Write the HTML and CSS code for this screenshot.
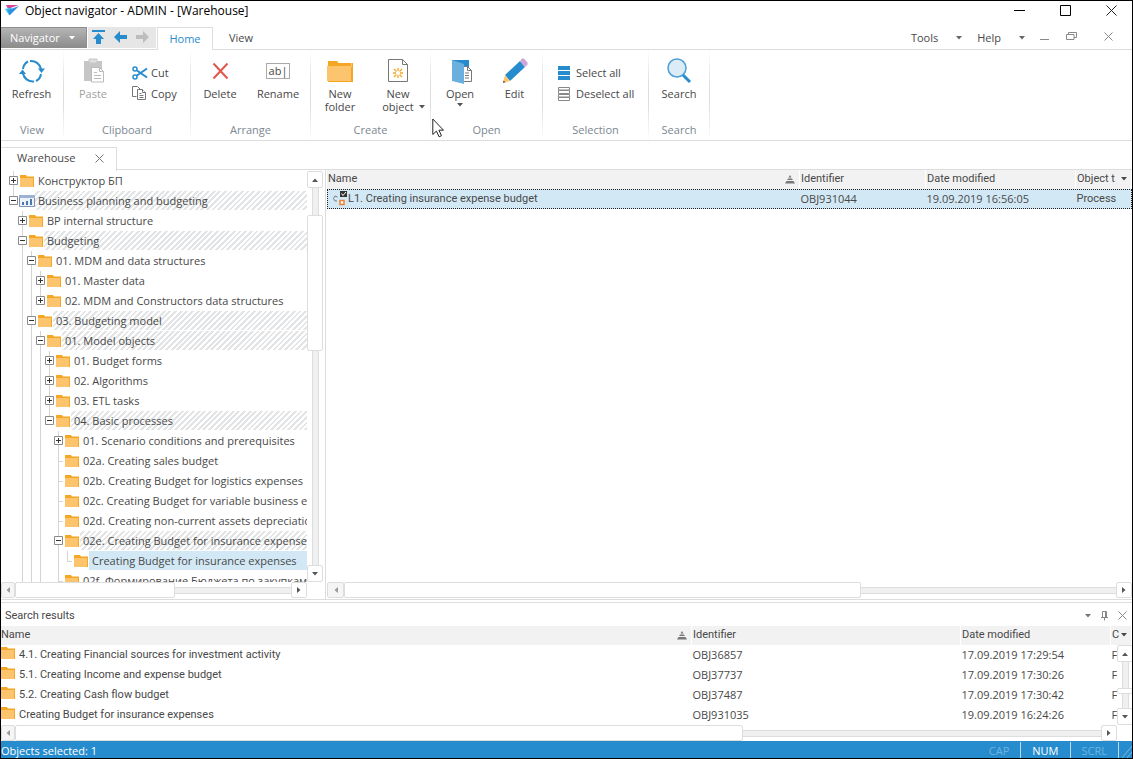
FILE: index.html
```html
<!DOCTYPE html>
<html lang="en">
<head>
<meta charset="utf-8">
<title>Object navigator - ADMIN - [Warehouse]</title>
<link rel="stylesheet" href="styles.css">
</head>
<body>
<svg class="defs" aria-hidden="true">
  <symbol id="folder" viewBox="0 0 14 14"><path d="M0 1.500q0-.5.5-.5h5.500l1 1.500h7v10.500H0z" fill="#f5a623"/><path d="M0 4h13v9H0z" fill="#fbc46d"/></symbol>
  <symbol id="plus" viewBox="0 0 9 9"><path d="M.5.5h8v8h-8z" fill="#fff" stroke="#8a8a8a"/><path d="M2 4.500h5M4.500 2v5" stroke="#333"/></symbol>
  <symbol id="minus" viewBox="0 0 9 9"><path d="M.5.5h8v8h-8z" fill="#fff" stroke="#8a8a8a"/><path d="M2 4.500h5" stroke="#333"/></symbol>
  <symbol id="down" viewBox="0 0 6 4"><path d="M0 0h6L3 3.500z" fill="currentColor"/></symbol>
  <symbol id="up" viewBox="0 0 6 4"><path d="M0 4h6L3 .5z" fill="currentColor"/></symbol>
  <symbol id="left" viewBox="0 0 4 6"><path d="M4 0v6L.5 3z" fill="currentColor"/></symbol>
  <symbol id="right" viewBox="0 0 4 6"><path d="M0 0v6l3.500-3z" fill="currentColor"/></symbol>
  <symbol id="sort" viewBox="0 0 10 9"><path d="M5 0l1.500 2.500h-3zM3 3.500h4l.8 1.500H2.200zM1.500 6h7L10 8.500H0z" fill="#777"/></symbol>
</svg>
<div class="app">
  <header class="titlebar">
    <svg class="logo" width="14" height="11" viewBox="0 0 14 11"><path d="M1 0h12.500L3 4z" fill="#d6479b"/><path d="M0 4l7-1.500L4 10z" fill="#33c5ee"/><path d="M14 1L3 5l1.500 5.500z" fill="#2f8fe0"/></svg>
    <h1>Object navigator - ADMIN - [Warehouse]</h1>
    <div class="winbtns">
      <button aria-label="Minimize"><svg width="11" height="11"><path d="M0 5.500h11" stroke="#000"/></svg></button>
      <button aria-label="Maximize"><svg width="11" height="11"><path d="M.5.5h10v10H.5z" fill="none" stroke="#000"/></svg></button>
      <button aria-label="Close"><svg width="11" height="11"><path d="M.5.5l10 10m0-10l-10 10" stroke="#222"/></svg></button>
    </div>
  </header>

  <nav class="tabbar">
    <button class="navigator">Navigator <svg width="6" height="4"><use href="#down"/></svg></button>
    <div class="quick">
      <button aria-label="Up"><svg width="13" height="14"><path d="M0 0h13v2H0zM6.500 3l5.500 6H9v5H4V9H1z" fill="#268ccd"/></svg></button>
      <button aria-label="Back"><svg width="13" height="12"><path d="M0 6l6-6v4h7v4H6v4z" fill="#268ccd"/></svg></button>
      <button aria-label="Forward" disabled><svg width="13" height="12"><path d="M13 6L7 0v4H0v4h7v4z" fill="#bdbdbd"/></svg></button>
    </div>
    <button class="tab active">Home</button>
    <button class="tab">View</button>
    <div class="menus">
      <button class="menu">Tools <svg width="6" height="4"><use href="#down"/></svg></button>
      <button class="menu help">Help <svg width="6" height="4"><use href="#down"/></svg></button>
      <button aria-label="Minimize document"><svg width="9" height="10"><path d="M0 6.500h9" stroke="#888"/></svg></button>
      <button class="rest" aria-label="Restore document"><svg width="11" height="9"><path d="M.5 2.500h7.500v5H.5zM2.500 2.500v-2h8v5H8" fill="none" stroke="#888"/></svg></button>
      <button class="docx" aria-label="Close document"><svg width="9" height="9"><path d="M.5.5l8 8m0-8l-8 8" stroke="#888"/></svg></button>
    </div>
  </nav>

  <section class="ribbon" aria-label="Ribbon">
    <div class="group g-view">
      <div class="tools">
        <button class="big"><svg width="26" height="26" fill="none" stroke="#268ccd" stroke-width="2"><path d="M4 11a9.500 9.500 0 0 1 5-7.500M11 3a10 10 0 0 1 11 8M22 16a9.500 9.500 0 0 1-5 7M15 23.500a10 10 0 0 1-11-8"/><path d="M19 10.500h7l-3.500 4.500zM0 16h7l-3.500-4.500z" fill="#268ccd" stroke="none"/></svg><span>Refresh</span></button>
      </div>
      <div class="caption">View</div>
    </div>
    <div class="group g-clip">
      <div class="tools">
        <button class="big" disabled><svg width="26" height="26"><path d="M4 3h18v20H4z" fill="#c6c6c6"/><path d="M9 1h8v4H9z" fill="#dedede" stroke="#c6c6c6"/><path d="M11.500 9.500h8l4 4v10.500h-12z" fill="#fff" stroke="#bbb"/><path d="M19.500 9.500v4h4M14 14.500h3M14 17.500h7M14 20.500h7" fill="none" stroke="#bbb"/></svg><span>Paste</span></button>
        <div class="stack">
          <button class="small"><svg width="16" height="14" fill="none" stroke="#268ccd" stroke-width="1.500"><circle cx="3" cy="3" r="2"/><circle cx="3" cy="11" r="2"/><path d="M5 4.500l10 7M5 9.500l10-7" stroke-width="2"/></svg>Cut</button>
          <button class="small"><svg width="16" height="15" fill="#fff" stroke="#777"><path d="M4.500 10.500h-4V.5h5l3 3"/><path d="M5.500 3.500h5l3 3v7h-8z"/><path d="M10.500 3.500v3h3M7.500 7.500h2M7.500 9.500h4M7.500 11.500h4"/></svg>Copy</button>
        </div>
      </div>
      <div class="caption">Clipboard</div>
    </div>
    <div class="group g-pair">
      <div class="tools">
        <button class="big"><svg width="26" height="26"><path d="M6.500 5.500l14 15m0-15l-14 15" stroke="#e2574c" stroke-width="2"/></svg><span>Delete</span></button>
        <button class="big"><span class="abl">ab|</span><span>Rename</span></button>
      </div>
      <div class="caption">Arrange</div>
    </div>
    <div class="group g-pair">
      <div class="tools">
        <button class="big"><svg width="26" height="26"><path d="M1 3h9l1.500 2H26v19H1z" fill="#f5a623"/><path d="M24.500 5v3.500H0" fill="none" stroke="#fbc46d"/><path d="M1 8h23v15H0V8z" fill="#fbc46d"/></svg><span>New<br>folder</span></button>
        <button class="big"><svg width="26" height="26"><path d="M3.500 1.500h14l5 5v17h-19z" fill="#fff" stroke="#777"/><path d="M17.500 1.500v5h5" fill="none" stroke="#777"/><path d="M13 10v3M13 17v3M8 15h3M15 15h3M9 11l2.500 2.500M17 11l-2.500 2.500M9 19l2.500-2.500M17 19l-2.500-2.500" stroke="#f5a623" stroke-width="1.300"/></svg><span class="drop">New<br>object <svg width="6" height="4"><use href="#down"/></svg></span></button>
      </div>
      <div class="caption">Create</div>
    </div>
    <div class="group g-open">
      <div class="tools">
        <button class="big"><svg width="26" height="26"><path d="M5 2h17v20H5z" fill="#268ccd"/><path d="M13.500 8.500h7l4 4V23.500h-11z" fill="#fff" stroke="#777"/><path d="M20.500 8.500v4h4M18 15h4M18 17.500h4M18 20h4" fill="none" stroke="#777"/><path d="M5 2l12 4v20L5 23z" fill="#69b0df"/></svg><span>Open</span><svg class="below" width="6" height="4"><use href="#down"/></svg></button>
        <button class="big narrow"><svg width="26" height="26"><path d="M18 3l5 6L8 23l-5-6z" fill="#268ccd"/><path d="M18 3l2-2.500h2l3.500 4v2L23 9z" fill="#cfa4d8"/><path d="M3 17l5 6-7 2z" fill="#fbc46d"/><path d="M1.500 22.500L1 25l2.500-.7z" fill="#555"/></svg><span>Edit</span></button>
      </div>
      <div class="caption">Open</div>
    </div>
    <div class="group g-sel">
      <div class="tools">
        <div class="stack">
          <button class="small"><svg width="13" height="14" fill="#268ccd"><path d="M1 0h12v4H1zM1 5h12v4H1zM1 10h12v4H1z"/></svg>Select all</button>
          <button class="small"><svg width="13" height="14" fill="#fff" stroke="#888"><path d="M1.500.5h11v2.500h-11zM1.500 3.500h11v3h-11zM1.500 7.500h11v2.500h-11zM1.500 10.500h11v3h-11z"/></svg>Deselect all</button>
        </div>
      </div>
      <div class="caption">Selection</div>
    </div>
    <div class="group g-search">
      <div class="tools">
        <button class="big"><svg width="26" height="26"><path d="M17 17l7 7" stroke="#268ccd" stroke-width="3"/><circle cx="11" cy="10" r="9" fill="#dcecf6" stroke="#4a9fd6" stroke-width="1.500"/></svg><span>Search</span></button>
      </div>
      <div class="caption">Search</div>
    </div>
  </section>

  <div class="doctabs">
    <div class="doctab">Warehouse <button aria-label="Close Warehouse"><svg width="9" height="9"><path d="M.5.5l8 8m0-8l-8 8" stroke="#777"/></svg></button></div>
  </div>

  <main class="work">
    <section class="treepane" aria-label="Warehouse tree">
      <div class="treebody">
        <ul class="tree">
          <li><button class="exp first"><svg><use href="#plus"/></svg></button><svg class="fi"><use href="#folder"/></svg><span>Конструктор БП</span></li>
          <li class="hatch"><button class="exp last"><svg><use href="#minus"/></svg></button><svg class="root" width="16" height="12"><path d="M.5.5h15v11H.5z" fill="#eef2f8" stroke="#7d93b5"/><path d="M0 0h16v3H0z" fill="#9db2d0"/><path d="M3 7h2v3H3zM7 6h2v4H7zM11 4h2v6h-2z" fill="#4a78b5"/></svg><span>Business planning and budgeting</span></li>
          <li><i></i><button class="exp"><svg><use href="#plus"/></svg></button><svg class="fi"><use href="#folder"/></svg><span>BP internal structure</span></li>
          <li class="hatch"><i></i><button class="exp"><svg><use href="#minus"/></svg></button><svg class="fi"><use href="#folder"/></svg><span>Budgeting</span></li>
          <li><i></i><i class="on"></i><button class="exp"><svg><use href="#minus"/></svg></button><svg class="fi"><use href="#folder"/></svg><span>01. MDM and data structures</span></li>
          <li><i></i><i class="on"></i><i class="on"></i><button class="exp"><svg><use href="#plus"/></svg></button><svg class="fi"><use href="#folder"/></svg><span>01. Master data</span></li>
          <li><i></i><i class="on"></i><i class="on"></i><button class="exp last"><svg><use href="#plus"/></svg></button><svg class="fi"><use href="#folder"/></svg><span>02. MDM and Constructors data structures</span></li>
          <li class="hatch"><i></i><i class="on"></i><button class="exp"><svg><use href="#minus"/></svg></button><svg class="fi"><use href="#folder"/></svg><span>03. Budgeting model</span></li>
          <li class="hatch"><i></i><i class="on"></i><i class="on"></i><button class="exp"><svg><use href="#minus"/></svg></button><svg class="fi"><use href="#folder"/></svg><span>01. Model objects</span></li>
          <li><i></i><i class="on"></i><i class="on"></i><i class="on"></i><button class="exp"><svg><use href="#plus"/></svg></button><svg class="fi"><use href="#folder"/></svg><span>01. Budget forms</span></li>
          <li><i></i><i class="on"></i><i class="on"></i><i class="on"></i><button class="exp"><svg><use href="#plus"/></svg></button><svg class="fi"><use href="#folder"/></svg><span>02. Algorithms</span></li>
          <li><i></i><i class="on"></i><i class="on"></i><i class="on"></i><button class="exp"><svg><use href="#plus"/></svg></button><svg class="fi"><use href="#folder"/></svg><span>03. ETL tasks</span></li>
          <li class="hatch"><i></i><i class="on"></i><i class="on"></i><i class="on"></i><button class="exp last"><svg><use href="#minus"/></svg></button><svg class="fi"><use href="#folder"/></svg><span>04. Basic processes</span></li>
          <li><i></i><i class="on"></i><i class="on"></i><i class="on"></i><i></i><button class="exp"><svg><use href="#plus"/></svg></button><svg class="fi"><use href="#folder"/></svg><span>01. Scenario conditions and prerequisites</span></li>
          <li><i></i><i class="on"></i><i class="on"></i><i class="on"></i><i></i><i class="on tee"></i><svg class="fi"><use href="#folder"/></svg><span>02a. Creating sales budget</span></li>
          <li><i></i><i class="on"></i><i class="on"></i><i class="on"></i><i></i><i class="on tee"></i><svg class="fi"><use href="#folder"/></svg><span>02b. Creating Budget for logistics expenses</span></li>
          <li><i></i><i class="on"></i><i class="on"></i><i class="on"></i><i></i><i class="on tee"></i><svg class="fi"><use href="#folder"/></svg><span>02c. Creating Budget for variable business e</span></li>
          <li><i></i><i class="on"></i><i class="on"></i><i class="on"></i><i></i><i class="on tee"></i><svg class="fi"><use href="#folder"/></svg><span>02d. Creating non-current assets depreciatio</span></li>
          <li class="hatch"><i></i><i class="on"></i><i class="on"></i><i class="on"></i><i></i><button class="exp"><svg><use href="#minus"/></svg></button><svg class="fi"><use href="#folder"/></svg><span>02e. Creating Budget for insurance expense</span></li>
          <li class="selected"><i></i><i class="on"></i><i class="on"></i><i class="on"></i><i></i><i class="on"></i><i class="end"></i><svg class="fi"><use href="#folder"/></svg><span>Creating Budget for insurance expenses</span></li>
          <li><i></i><i class="on"></i><i class="on"></i><i class="on"></i><i></i><i class="on tee"></i><svg class="fi"><use href="#folder"/></svg><span>02f. Формирование Бюджета по закупкам</span></li>
        </ul>
        <div class="vscroll">
          <button class="sb" aria-label="Scroll up"><svg width="6" height="4"><use href="#up"/></svg></button>
          <div class="track"><div class="thumb tree-v"></div></div>
          <button class="sb" aria-label="Scroll down"><svg width="6" height="4"><use href="#down"/></svg></button>
        </div>
      </div>
      <div class="hscroll">
        <button class="sb dim" aria-label="Scroll left"><svg width="4" height="6"><use href="#left"/></svg></button>
        <div class="track"><div class="thumb tree-h"></div></div>
        <button class="sb" aria-label="Scroll right"><svg width="4" height="6"><use href="#right"/></svg></button>
      </div>
    </section>

    <section class="listpane" aria-label="Objects">
      <div class="listbody">
        <table class="grid objects">
          <colgroup><col><col class="c-id"><col class="c-date"><col class="c-type"></colgroup>
          <thead><tr><th><div class="sorted">Name <svg width="10" height="9"><use href="#sort"/></svg></div></th><th>Identifier</th><th>Date modified</th><th><div class="sorted more">Object t <button aria-label="Columns"><svg width="6" height="4"><use href="#down"/></svg></button></div></th></tr></thead>
          <tbody><tr class="selected"><td class="name"><div class="cell"><svg class="proc" width="14" height="16"><path d="M4.500 6L2 5l-1.500 2.500L2 10h2" fill="none" stroke="#777"/><path d="M7 0h7v6H7z" fill="#333"/><path d="M8.500 2.500l1.500 2 3-3.500" fill="none" stroke="#fff"/><path d="M7 9.500h4v4H7z" fill="#fff" stroke="#ee8133" stroke-width="1.500"/></svg>L1. Creating insurance expense budget</div></td><td>OBJ931044</td><td>19.09.2019 16:56:05</td><td class="name">Process</td></tr></tbody>
        </table>
      </div>
      <div class="hscroll">
        <button class="sb dim" aria-label="Scroll left"><svg width="4" height="6"><use href="#left"/></svg></button>
        <div class="track"><div class="thumb list-h"></div></div>
        <button class="sb" aria-label="Scroll right"><svg width="4" height="6"><use href="#right"/></svg></button>
      </div>
    </section>
  </main>

  <section class="results" aria-label="Search results">
    <div class="rtitle"><h2>Search results</h2>
      <button aria-label="Panel menu"><svg width="6" height="4"><use href="#down"/></svg></button>
      <button aria-label="Pin"><svg width="9" height="10" fill="none" stroke="#888"><path d="M2.500 6V.5h4V6M5.500 0v6M1 6.500h7M4.500 6.500v3"/></svg></button>
      <button aria-label="Close panel"><svg width="9" height="9"><path d="M.5.5l8 8m0-8l-8 8" stroke="#888"/></svg></button>
    </div>
    <div class="rbody">
      <table class="grid found">
        <colgroup><col><col class="r-id"><col class="r-date"><col class="r-type"></colgroup>
        <thead><tr><th><div class="sorted">Name <svg width="10" height="9"><use href="#sort"/></svg></div></th><th>Identifier</th><th>Date modified</th><th><div class="sorted more">C <button aria-label="Columns"><svg width="6" height="4"><use href="#down"/></svg></button></div></th></tr></thead>
        <tbody>
          <tr><td class="name"><div class="cell"><svg class="fi"><use href="#folder"/></svg>4.1. Creating Financial sources for investment activity</div></td><td>OBJ36857</td><td>17.09.2019 17:29:54</td><td>F</td></tr>
          <tr><td class="name"><div class="cell"><svg class="fi"><use href="#folder"/></svg>5.1. Creating Income and expense budget</div></td><td>OBJ37737</td><td>17.09.2019 17:30:26</td><td>F</td></tr>
          <tr><td class="name"><div class="cell"><svg class="fi"><use href="#folder"/></svg>5.2. Creating Cash flow budget</div></td><td>OBJ37487</td><td>17.09.2019 17:30:42</td><td>F</td></tr>
          <tr><td class="name"><div class="cell"><svg class="fi"><use href="#folder"/></svg>Creating Budget for insurance expenses</div></td><td>OBJ931035</td><td>19.09.2019 16:24:26</td><td>F</td></tr>
        </tbody>
      </table>
      <div class="vscroll over">
        <button class="sb" aria-label="Scroll up"><svg width="6" height="4"><use href="#up"/></svg></button>
        <div class="track"><div class="thumb found-v"></div></div>
        <button class="sb" aria-label="Scroll down"><svg width="6" height="4"><use href="#down"/></svg></button>
      </div>
    </div>
    <div class="hscroll">
      <button class="sb dim" aria-label="Scroll left"><svg width="4" height="6"><use href="#left"/></svg></button>
      <div class="track"><div class="thumb found-h"></div></div>
      <button class="sb" aria-label="Scroll right"><svg width="4" height="6"><use href="#right"/></svg></button>
    </div>
  </section>

  <footer class="status">
    <span class="msg">Objects selected: 1</span>
    <span class="key">CAP</span><span class="key lit">NUM</span><span class="key">SCRL</span>
    <svg class="grip" width="13" height="14"><path d="M3 14L13 2M8 14l5-6" stroke="#7db4dc"/></svg>
  </footer>
  <svg class="cursor" width="12" height="20"><path d="M.8 1v15.500l3.600-3.400 2.700 5.700 2.400-1.100-2.600-5.500h4.600z" fill="#fff" stroke="#222"/></svg>
</div>
</body>
</html>
```
FILE: styles.css
```css
* { box-sizing: border-box; }
body { margin: 0; font: 11px/14px "Open Sans", "Noto Sans", sans-serif; color: #484848; background: #fff; }
button { font: inherit; color: inherit; background: none; border: 0; padding: 0; margin: 0; }
h1, h2 { margin: 0; font-weight: normal; }
svg { display: block; flex: none; }
.defs { position: absolute; width: 0; height: 0; }
.app { position: relative; display: flex; flex-direction: column; height: 100vh; border: 1px solid #000; overflow: hidden; }

.titlebar { display: flex; align-items: center; height: 26px; padding: 0 15px 7px 4px; color: #000; flex: none; }
.titlebar h1 { flex: 1; margin-left: 6px; font-size: 12px; line-height: 16px; }
.winbtns { display: flex; gap: 35px; }

.tabbar { display: flex; height: 23px; flex: none; border-bottom: 1px solid #ddd; }
.navigator { display: flex; align-items: center; gap: 9px; width: 86px; height: 21px; padding-left: 9px; color: #fff; background: linear-gradient(#b4b4b4, #8d8d8d); border: 1px solid #8d8d8d; border-left: 0; }
.quick { display: flex; align-items: center; gap: 9px; height: 21px; width: 68px; margin-left: 1px; padding: 0 4px 2px; background: #e6e6e6; }
.tab { width: 56px; height: 23px; padding-bottom: 1px; color: #484848; }
.tab.active { margin-left: 1px; color: #268ccd; background: #fff; border: 1px solid #ddd; border-bottom: 0; }
.menus { display: flex; align-items: center; margin-left: auto; padding-right: 19px; }
.menu { display: flex; align-items: center; gap: 18px; margin-right: 15px; }
.menu svg { color: #666; }
.rest { margin: 0 0 4px 17px; }
.docx { margin: 0 0 4px 27px; }

.ribbon { display: flex; flex: none; height: 91px; border-bottom: 1px solid #ddd; }
.group { display: flex; flex-direction: column; border-right: 1px solid; border-image: linear-gradient(#fff, #ddd 40%, #ddd 60%, #fff) 1; }
.g-view { width: 63px; }
.g-clip { width: 127px; }
.g-pair { width: 120px; }
.g-open { width: 112px; }
.g-sel { width: 106px; }
.g-search { width: 61px; }
.tools { display: flex; flex: 1; padding-top: 8px; }
.big { display: flex; flex-direction: column; align-items: center; width: 58px; line-height: 13px; }
.big > span:last-of-type { margin-top: 3px; }
.g-view .big { width: 61px; }
.g-search .big { width: 62px; }
.big.narrow { width: 51px; }
.big:disabled { color: #a0a0a0; }
.below { margin-top: 3px; color: #555; }
.big .abl { margin: 5px 0; width: 24px; height: 16px; line-height: 13px; border: 1px solid #aaa; }
.drop { position: relative; }
.drop svg { position: absolute; right: -11px; bottom: 4px; color: #555; }
.stack { display: flex; flex-direction: column; gap: 6px; padding-top: 7px; }
.g-clip .stack { padding-left: 10px; }
.g-sel .stack { padding-left: 14px; }
.small { display: flex; align-items: center; gap: 6px; height: 15px; }
.g-clip .small { gap: 3px; }
.caption { height: 17px; text-align: center; color: #7c8791; }
.cursor { position: absolute; left: 431px; top: 117px; }

.doctabs { display: flex; flex: none; height: 29px; padding-top: 6px; border-bottom: 1px solid #ddd; }
.doctab { display: flex; align-items: center; gap: 20px; width: 116px; height: 24px; padding: 0 0 3px 16px; background: #fff; border: 1px solid #ddd; border-width: 1px 1px 0 0; margin-bottom: -1px; }

.work { display: flex; flex: 1; min-height: 0; border-bottom: 1px solid #ddd; }
.treepane { display: flex; flex-direction: column; width: 325px; flex: none; border-right: 1px solid #ddd; }
.treebody { display: flex; flex: 1; min-height: 0; }
.tree { flex: 1; min-width: 0; list-style: none; margin: 0; padding: 1px 0 0; overflow: hidden; }
.tree li { display: flex; height: 20px; padding-left: 8px; white-space: nowrap; font-size: 11px; }
.tree li span { flex: 1; min-width: 0; height: 19px; line-height: 20px; margin-left: 1px; padding-left: 3px; overflow: hidden; }
.tree i { flex: none; width: 9px; height: 20px; }
.tree i.on, .exp { background: linear-gradient(#d4d4d4, #d4d4d4) 4px 0 / 1px 100% no-repeat; }
.exp { flex: none; width: 9px; height: 20px; padding: 5px 0 6px; }
.exp.last { background-size: 1px 50%; }
.exp svg { width: 9px; height: 9px; }
.tree i.tee { background: linear-gradient(#d4d4d4, #d4d4d4) 4px 0 / 1px 100% no-repeat, linear-gradient(#d4d4d4, #d4d4d4) 4px 10px / 5px 1px no-repeat; }
.tree i.end { background: linear-gradient(#d4d4d4, #d4d4d4) 4px 0 / 1px 10px no-repeat, linear-gradient(#d4d4d4, #d4d4d4) 4px 10px / 5px 1px no-repeat; }
.fi { width: 14px; height: 14px; margin: 3px 0 0 2px; }
.root { margin: 4px -1px 0 1px; }
.hatch span { background: repeating-linear-gradient(135deg, #fff 0 2px, #e2e4e5 2px 4px); }
.tree .selected span { background: #d3e8f5; }

.vscroll { display: flex; flex-direction: column; width: 18px; flex: none; padding-top: 1px; }
.hscroll { display: flex; height: 17px; flex: none; }
.sb { display: flex; align-items: center; justify-content: center; flex: none; width: 16px; height: 17px; background: #fff; border: 1px solid #ddd; border-radius: 2px; color: #555; }
.sb.dim { color: #999; background: #f5f5f5; }
.hscroll .sb { height: 16px; }
.hscroll .sb.dim { width: 14px; }
.listpane .hscroll .sb.dim { width: 17px; }
.hscroll .track { flex: 1; min-width: 0; background: linear-gradient(#ddd 0 1px, #f0f0f0 1px 6px, #ddd 6px 7px) 0 5px / 100% 7px no-repeat; }
.vscroll .track { flex: 1; min-height: 0; background: linear-gradient(90deg, #ddd 0 1px, #f0f0f0 1px 6px, #ddd 6px 7px) 5px 0 / 7px 100% no-repeat; }
.thumb { background: #fff; border: 1px solid #ddd; border-radius: 2px; }
.hscroll .thumb { height: 16px; }
.vscroll .thumb { width: 16px; }
.treepane .hscroll { padding-right: 18px; }
.tree-v { height: 136px; margin-top: 27px; }
.tree-h { width: 58%; }
.list-h { width: 67%; }
.found-v { height: 6px; margin-top: 26px; }
.found-h { width: 67%; }

.listpane { display: flex; flex-direction: column; flex: 1; min-width: 0; padding-left: 1px; }
.listbody { flex: 1; min-height: 0; }
.grid { width: 100%; table-layout: fixed; border-collapse: collapse; white-space: nowrap; }
.grid th { height: 19px; padding: 0 0 1px 1px; font-weight: normal; text-align: left; background: #f2f2f2; border-right: 1px solid #fff; }
.grid td { height: 20px; padding: 0 0 0 1px; overflow: hidden; }
.grid th, .grid .name, .rtitle h2 { font-family: Roboto, "Open Sans", sans-serif; }
.objects .selected { background: #d3e8f5; outline: 1px dotted #222; outline-offset: -1px; }
.sorted, .cell { display: flex; align-items: center; }
.sorted { justify-content: space-between; padding-right: 4px; }
.proc { margin: 0 1px 0 5px; }
.c-id { width: 126px; }
.c-date { width: 150px; }
.c-type { width: 56px; }

.results { display: flex; flex-direction: column; flex: none; margin-top: 2px; border-top: 1px solid #ddd; }
.rtitle { display: flex; align-items: center; gap: 9px; height: 23px; padding: 2px 5px 0 4px; color: #777; }
.rtitle h2 { flex: 1; font-size: 11px; color: #484848; }
.rbody { position: relative; }
.rbody .cell { gap: 4px; margin-left: -1px; }
.rbody .fi { margin: 0 0 4px 0; }
.found th:first-child { padding-left: 0; }
.r-id { width: 269px; }
.r-date { width: 150px; }
.r-type { width: 21px; }
.over { position: absolute; right: -3px; top: 19px; bottom: 0; background: #fff; padding: 0; }
.results .hscroll { height: 16px; padding-right: 15px; }

.status { display: flex; align-items: center; flex: none; height: 17px; padding-top: 3px; color: #fff; background: #268ccd; }
.msg { flex: 1; }
.key { margin-top: -2px; padding: 2px 11px 0; border-right: 1px solid #b9d9ee; color: #6fb3de; }
.key.lit { color: #fff; }
```
